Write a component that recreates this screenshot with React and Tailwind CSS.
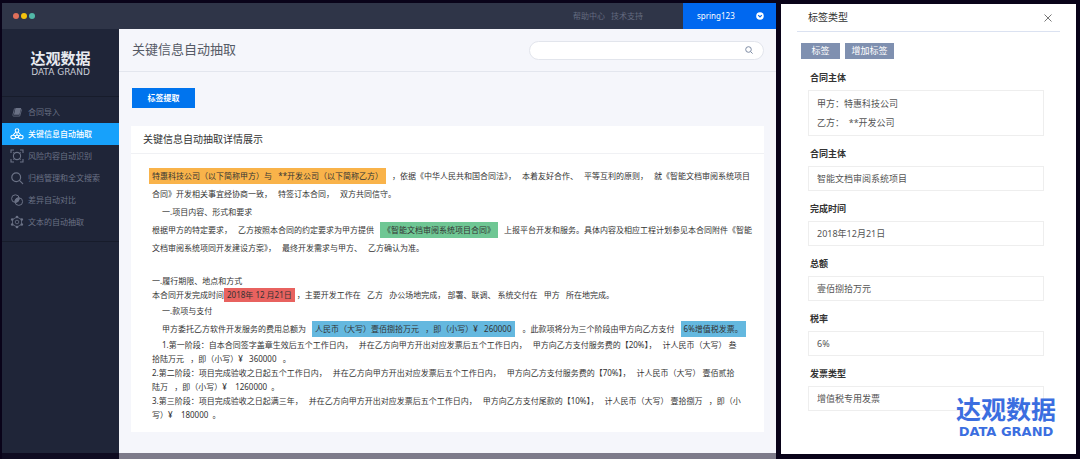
import { useState } from 'react'

const menu = [
    { name: '合同导入', icon: BookIcon },
    { name: '关键信息自动抽取', icon: ClusterIcon },
    { name: '风险内容自动识别', icon: ScanIcon },
    { name: '归档管理和全文搜索', icon: SearchIcon },
    { name: '差异自动对比', icon: DiffIcon },
    { name: '文本的自动抽取', icon: HexIcon },
]

const fields = [
    { id: 'project', label: '合同主体', value: '智能文档审阅系统项目' },
    { id: 'date', label: '完成时间', value: '2018年12月21日' },
    { id: 'amount', label: '总额', value: '壹佰捌拾万元' },
    { id: 'rate', label: '税率', value: '6%' },
    { id: 'invoice', label: '发票类型', value: '增值税专用发票' },
]

function BookIcon() {
    return (
        <svg viewBox="0 0 14 14" className="size-3.5" fill="currentColor">
            <path d="M5.500 3h5.700L9.400 9.800H3.900L5.500 3Z" />
            <path d="M4.500 3.500L2.900 9.800c-.2.9.2 1.300.9 1.300h5.900L11.600 4.400" fill="none" stroke="currentColor" strokeWidth=".8" />
        </svg>
    )
}

function ClusterIcon() {
    return (
        <svg viewBox="0 0 14 14" className="size-3.5" fill="none" stroke="currentColor" strokeWidth="1.100">
            <circle cx="7" cy="3.600" r="1.800" />
            <ellipse cx="3.200" cy="10" rx="2.300" ry="1.800" />
            <ellipse cx="10.800" cy="10" rx="2.300" ry="1.800" />
            <path d="M7 5.400v2.400M5 9.200l2-1.400 2 1.400M5.400 10.600h3.200M5.800 5L3.200 8M8.200 5l2.600 3" />
        </svg>
    )
}

function ScanIcon() {
    return (
        <svg viewBox="0 0 14 14" className="size-3.5" fill="none" stroke="currentColor" strokeWidth="1.100">
            <path d="M1 4V1h3M10 1h3v3M13 10v3h-3M4 13H1v-3" />
            <circle cx="7" cy="7" r="3.600" />
            <path d="M3.400 3.400l1.200 1.200M10.600 3.400L9.400 4.600M3.400 10.600l1.200-1.200M10.600 10.600L9.400 9.400" />
        </svg>
    )
}

function SearchIcon() {
    return (
        <svg viewBox="0 0 14 14" className="size-3.5" fill="none" stroke="currentColor" strokeWidth="1.200">
            <circle cx="6.200" cy="6.200" r="4.400" />
            <path d="M9.400 9.400l3.300 3.300" strokeLinecap="round" />
        </svg>
    )
}

function DiffIcon() {
    return (
        <svg viewBox="0 0 14 14" className="size-3.5" fill="none" stroke="currentColor" strokeWidth="1">
            <circle cx="5.400" cy="5.600" r="3.800" />
            <circle cx="8.800" cy="8.600" r="3.800" />
            <path d="M5.200 7.400a3.800 3.800 0 0 1 3.800-2.600 3.800 3.800 0 0 1-3.800 4.500Z" fill="currentColor" />
        </svg>
    )
}

function HexIcon() {
    return (
        <svg viewBox="0 0 14 14" className="size-3.5" fill="none" stroke="currentColor" strokeWidth=".8">
            <path d="M7 2l4.500 2.500v5L7 12 2.500 9.500v-5Z" />
            <circle cx="7" cy="7" r="1.800" />
            <g fill="currentColor" stroke="none">
                <circle cx="7" cy="2" r="1.300" />
                <circle cx="7" cy="12" r="1.300" />
                <circle cx="2.200" cy="4.500" r="1.300" />
                <circle cx="11.800" cy="4.500" r="1.300" />
                <circle cx="2.200" cy="9.500" r="1.300" />
                <circle cx="11.800" cy="9.500" r="1.300" />
            </g>
        </svg>
    )
}

// one printed line of the contract, clauses sit side by side
function Line({ children, indent }) {
    return <p className={indent ? 'flex gap-1.5 pl-2.5' : 'flex gap-1.5'}>{children}</p>
}

function Sidebar({ active, setActive }) {
    return (
        <aside className="flex flex-col w-[117px] shrink-0 bg-[#1f2538] text-[#6b7286]">
            <div className="flex flex-col items-center h-[68px] pt-5 text-[#e8eaf0] border-b border-[#171c2b]">
                <span className="text-[15px] leading-[18px] font-bold">达观数据</span>
                <span className="font-['DejaVu_Sans'] text-[9px] leading-[10px] text-[#c9ccd6]">DATA GRAND</span>
            </div>
            <nav className="flex flex-col pt-1 pb-2 border-b border-[#171c2b]">
                {menu.map(({ name, icon: Icon }, i) => (
                    <a
                        key={name}
                        href="#"
                        onClick={() => setActive(i)}
                        className={i === active
                            ? 'flex items-center gap-1 h-[22px] pl-2 text-[8px] font-medium bg-[#17a1fb] text-white'
                            : 'flex items-center gap-1 h-[22px] pl-2 text-[8px]'}
                    >
                        <Icon />
                        {name}
                    </a>
                ))}
            </nav>
            <div className="h-1.5 mt-auto bg-[#0e0b20]" />
        </aside>
    )
}

function Contract() {
    return (
        <section className="mx-3 mt-[18px] bg-white text-[#333]">
            <h2 className="h-7 px-3 text-[10px] leading-[27px] border-b border-[#f0f1f4]">关键信息自动抽取详情展示</h2>
            <div className="pt-[13px] pb-2.5 pl-[21px] text-[8px] whitespace-pre">
                <div className="leading-[18px]">
                    <Line>
                        <mark className="-ml-[3px] px-[3px] my-px leading-4 bg-[#f9b34a] text-inherit">特惠科技公司（以下简称甲方）与   **开发公司（以下简称乙方）</mark>
                        <span>，依据《中华人民共和国合同法》，</span>
                        <span>本着友好合作、</span>
                        <span>平等互利的原则，</span>
                        <span>就《智能文档审阅系统项目</span>
                    </Line>
                    <Line>
                        <span>合同》开发相关事宜经协商一致，</span>
                        <span>特签订本合同，</span>
                        <span>双方共同信守。</span>
                    </Line>
                    <Line indent>一.项目内容、形式和要求</Line>
                    <Line>
                        <span>根据甲方的特定要求，</span>
                        <span>乙方按照本合同的约定要求为甲方提供</span>
                        <mark className="px-[3px] my-px leading-4 bg-[#6fc794] text-inherit">《智能文档审阅系统项目合同》</mark>
                        <span>上报平台开发和服务。具体内容及相应工程计划参见本合同附件《智能</span>
                    </Line>
                    <Line>
                        <span>文档审阅系统项同开发建设方案》，</span>
                        <span>最终开发需求与甲方、</span>
                        <span>乙方确认为准。</span>
                    </Line>
                </div>
                <div className="mt-[17px] leading-[14px]">
                    <Line>一.履行期限、地点和方式</Line>
                    <p className="flex">
                        <span>本合同开发完成时间</span>
                        <mark className="px-[3px] bg-[#e8625f] text-inherit">2018年 12 月21日</mark>
                        <span> ，主要开发工作在   乙方   办公场地完成， 部署、联调、 系统交付在   甲方   所在地完成。</span>
                    </p>
                </div>
                <div className="leading-[18px]">
                    <Line indent>一.款项与支付</Line>
                    <Line indent>
                        <span>甲方委托乙方软件开发服务的费用总额为</span>
                        <mark className="px-[3px] my-px leading-4 bg-[#64b8df] text-inherit">人民币（大写）壹佰捌拾万元   ，即（小写）¥   260000</mark>
                        <span> 。此款项将分为三个阶段由甲方向乙方支付</span>
                        <mark className="px-[3px] my-px leading-4 bg-[#64b8df] text-inherit">6%增值税发票。</mark>
                    </Line>
                </div>
                <div className="leading-[14px]">
                    <Line indent>
                        <span>1.第一阶段：自本合同签字盖章生效后五个工作日内，</span>
                        <span>并在乙方向甲方开出对应发票后五个工作日内，</span>
                        <span>甲方向乙方支付服务费的【20%】，</span>
                        <span>计人民币（大写） 叁</span>
                    </Line>
                    <Line>拾陆万元   ，即（小写）¥   360000   。</Line>
                    <Line>
                        <span>2.第二阶段：项目完成验收之日起五个工作日内，</span>
                        <span>并在乙方向甲方开出对应发票后五个工作日内，</span>
                        <span>甲方向乙方支付服务费的【70%】，</span>
                        <span>计人民币（大写） 壹佰贰拾</span>
                    </Line>
                    <Line>陆万   ，即（小写）¥    1260000  。</Line>
                    <Line>
                        <span>3.第三阶段：项目完成验收之日起满三年，</span>
                        <span>并在乙方向甲方开出对应发票后五个工作日内，</span>
                        <span>甲方向乙方支付尾款的【10%】，</span>
                        <span>计人民币（大写） 壹拾捌万   ，即（小</span>
                    </Line>
                    <Line>写）¥    180000  。</Line>
                </div>
            </div>
        </section>
    )
}

function TagPanel() {
    return (
        <aside className="relative w-[295px] shrink-0 mt-1 mb-[5px] px-4 bg-white text-[9px] text-[#555]">
            <header className="flex items-center justify-between h-7 mb-[11px] pl-[11px] pr-2 border-b border-[#dbe2f1]">
                <h2 className="text-[10px] text-[#333]">标签类型</h2>
                <button aria-label="关闭" className="text-[#777]">
                    <svg viewBox="0 0 8 8" className="size-2" stroke="currentColor" strokeWidth="1">
                        <path d="M.5.5l7 7M7.500.5l-7 7" />
                    </svg>
                </button>
            </header>
            <div className="flex gap-[5px] pl-1 text-white">
                <button className="h-4 w-[39px] bg-[#7f90b0]">标签</button>
                <button className="h-4 w-[49px] bg-[#7f90b0]">增加标签</button>
            </div>
            <div className="pl-[11px] pr-4 pb-10">
                <label htmlFor="parties" className="block pt-[11px] pb-[5px] pl-0.5 leading-[15px] font-bold text-[#333]">合同主体</label>
                <textarea
                    id="parties"
                    className="block w-full h-[46px] px-2 py-[3px] leading-[19px] border border-[#eee] resize-none overflow-hidden outline-none"
                    defaultValue={'甲方：特惠科技公司\n乙方：  **开发公司'}
                />
                {fields.map((f) => (
                    <div key={f.id}>
                        <label htmlFor={f.id} className="block pt-2.5 pb-[5px] pl-0.5 leading-[15px] font-bold text-[#333]">{f.label}</label>
                        <input id={f.id} defaultValue={f.value} className="block w-full h-[25px] px-2 border border-[#eee] outline-none" />
                    </div>
                ))}
            </div>
            {/* Watermark */}
            <div className="absolute right-5 bottom-3.5 flex flex-col items-center text-[#3b6ee0]">
                <span className="text-[25px] leading-[30px] font-bold">达观数据</span>
                <span className="font-['DejaVu_Sans'] text-[13px] leading-4 font-bold">DATA GRAND</span>
            </div>
        </aside>
    )
}

export default function App() {
    const [active, setActive] = useState(1)

    return (
        <div className="flex gap-[5px] min-h-screen pl-0.5 pr-1 bg-[#090319] font-['Noto_Sans','Noto_Sans_CJK_SC',sans-serif]">
            <div className="flex flex-col flex-1 min-w-0 mt-[3px]">
                <header className="flex items-center h-[26px] pl-[11px] bg-[#2f3548] text-[8px] text-[#636a7f]">
                    <div className="flex gap-0.5">
                        <i className="size-1.5 rounded-full bg-[#e0705a]" />
                        <i className="size-1.5 rounded-full bg-[#f4c20d]" />
                        <i className="size-1.5 rounded-full bg-[#52b8a8]" />
                    </div>
                    <nav className="flex gap-1.5 ml-auto mr-10">
                        <a href="#">帮助中心</a>
                        <a href="#">技术支持</a>
                    </nav>
                    <button className="flex items-center justify-between w-[93px] h-full pl-3.5 pr-3 bg-[#0068f0] text-white">
                        spring123
                        <svg viewBox="0 0 8 8" className="size-2">
                            <circle cx="4" cy="4" r="3.800" fill="#fff" />
                            <path d="M2.200 3.200L4 5l1.800-1.800" fill="none" stroke="#0068f0" strokeWidth="1.200" />
                        </svg>
                    </button>
                </header>
                <div className="flex flex-1">
                    <Sidebar active={active} setActive={setActive} />
                    <main className="flex flex-col flex-1 min-w-0 bg-[#f5f6fb]">
                        <div className="flex items-center justify-between h-[43px] pl-[13px] pr-3 border-b border-[#e3e6ee]">
                            <h1 className="text-[13px] text-[#555a66]">关键信息自动抽取</h1>
                            <label className="flex items-center w-[235px] h-[19px] px-2.5 rounded-full bg-white border border-[#e2e5ec] text-[#7d8ba3]">
                                <input aria-label="搜索" className="flex-1 min-w-0 text-[9px] outline-none" />
                                <svg viewBox="0 0 8 8" className="size-2" fill="none" stroke="currentColor" strokeWidth="1">
                                    <circle cx="3.500" cy="3.500" r="2.800" />
                                    <path d="M5.600 5.600l2 2" />
                                </svg>
                            </label>
                        </div>
                        <button className="w-[63px] h-5 ml-[13px] mt-4 shrink-0 bg-[#0074ee] text-white text-[8px] font-bold">标签提取</button>
                        <Contract />
                        <div className="h-1.5 mt-auto shrink-0 bg-[#7d7b8a]" />
                    </main>
                </div>
            </div>
            <TagPanel />
        </div>
    )
}
